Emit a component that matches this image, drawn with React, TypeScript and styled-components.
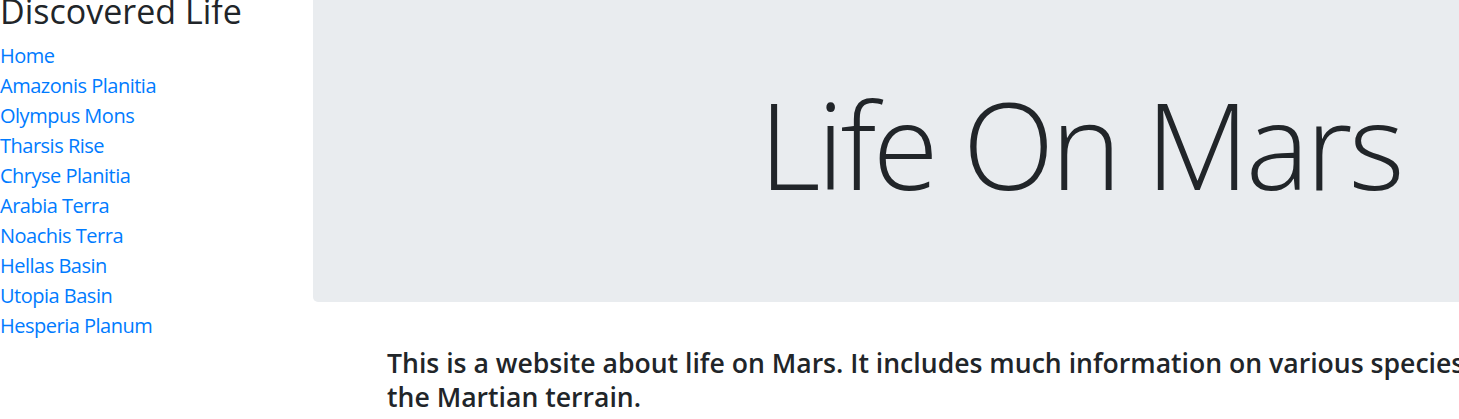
import React from "react";
import styled, { createGlobalStyle } from "styled-components";

const Global = createGlobalStyle`
  html, body { margin: 0; padding: 0; overflow: hidden; background: #fff; }
  body {
    font-family: "Open Sans", "Noto Sans", sans-serif;
    font-size: 16px;
    color: #212529;
  }
`;

const Page = styled.div`
  display: flex;
  align-items: flex-start;
  margin-top: -9px;
  width: 1847px;
`;

const Sidebar = styled.nav`
  width: 313px;
  flex: 0 0 313px;
  display: flex;
  flex-direction: column;
`;

const Title = styled.h2`
  margin: 0 0 10px;
  font-size: 34px;
  font-weight: 500;
  line-height: 40px;
  color: #212529;
  white-space: nowrap;
`;

const NavLink = styled.a`
  display: block;
  color: #007bff;
  text-decoration: none;
  font-size: 20px;
  line-height: 30px;
  letter-spacing: -0.5px;
  white-space: nowrap;
`;

const Main = styled.main`
  flex: 1;
  display: flex;
  flex-direction: column;
  min-width: 0;
`;

const Jumbotron = styled.section`
  background: #e9ecef;
  border-radius: 0 0 5px 5px;
  height: 311px;
  padding-bottom: 6px;
  box-sizing: border-box;
  display: flex;
  align-items: center;
  justify-content: center;
`;

const Display = styled.h1`
  margin: 0;
  font-size: 120px;
  font-weight: 300;
  line-height: 1;
  color: #212529;
  letter-spacing: -3.6px;
  white-space: nowrap;
`;

const Lead = styled.h3`
  margin: 44px 0 0;
  padding-left: 74px;
  font-size: 26.6px;
  font-weight: 600;
  line-height: 34px;
  color: #212529;
`;

const places = [
  "Home",
  "Amazonis Planitia",
  "Olympus Mons",
  "Tharsis Rise",
  "Chryse Planitia",
  "Arabia Terra",
  "Noachis Terra",
  "Hellas Basin",
  "Utopia Basin",
  "Hesperia Planum",
];

export default function App() {
  return (
    <>
      <Global />
      <Page>
        <Sidebar>
          <Title>Discovered Life</Title>
          {places.map((p) => (
            <NavLink key={p} href="#">
              {p}
            </NavLink>
          ))}
        </Sidebar>
        <Main>
          <Jumbotron>
            <Display>Life On Mars</Display>
          </Jumbotron>
          <Lead>
            This is a website about life on Mars. It includes much information on various species found across
            <br />
            the Martian terrain.
          </Lead>
        </Main>
      </Page>
    </>
  );
}
